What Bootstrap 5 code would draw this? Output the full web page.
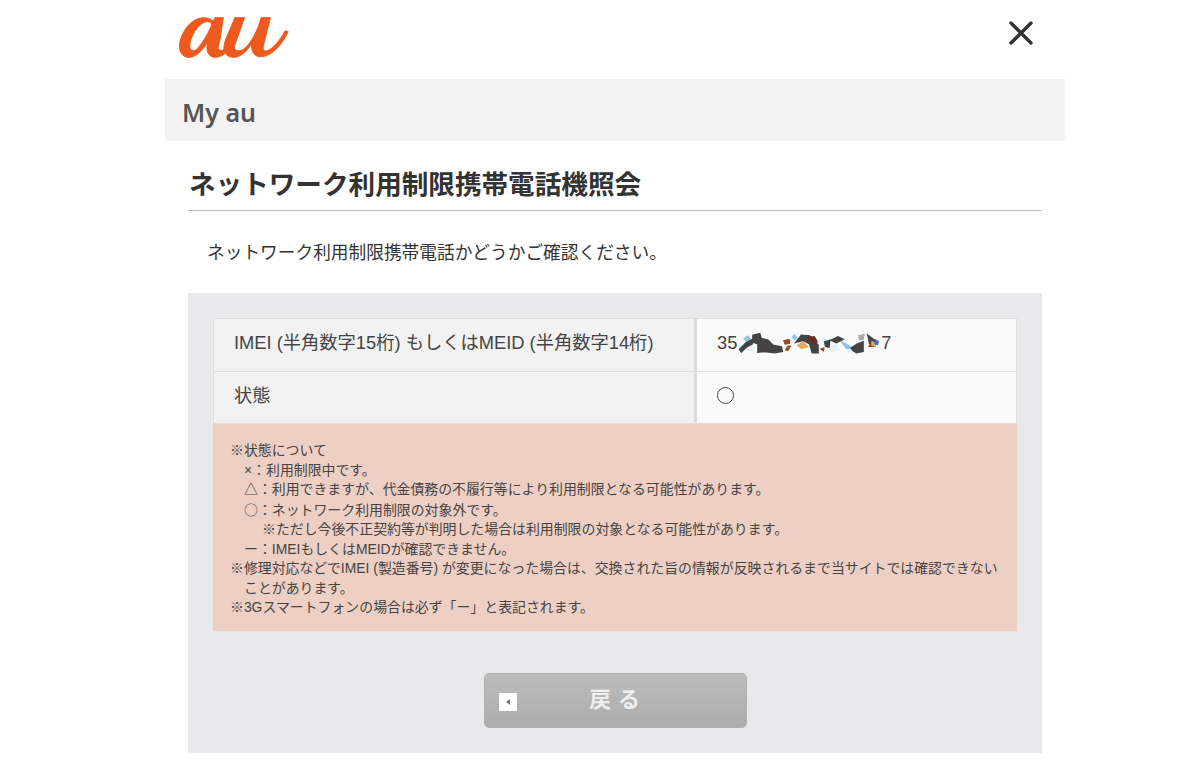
<!DOCTYPE html>
<html lang="ja">
<head>
    <meta charset="UTF-8">
    <meta name="viewport" content="width=device-width, initial-scale=1.0">
    <title>My au</title>
    <link href="https://cdn.jsdelivr.net/npm/bootstrap@5.3.3/dist/css/bootstrap.min.css" rel="stylesheet">
    <style>
        body{
            background-color: #fff;
            color: #333;
            font-family: "Liberation Sans", "Noto Sans CJK JP", sans-serif;
        }
        .wrap{
            width: 900px;
            height: 766px;
            margin-left: 165px;
            overflow: hidden;
        }
        .top-head{
            height: 79px;
            padding-left: 14px;
            padding-right: 31px;
        }
        .logo-au{
            width: 110px;
            height: 41px;
            margin-top: -5px;
            fill: #ee5a1e;
            stroke: #ee5a1e;
            stroke-width: 3;
        }
        .close-x{
            width: 26px;
            height: 26px;
            margin-top: -13px;
        }
        .myau-bar{
            height: 62px;
            padding-left: 17px;
            padding-top: 5px;
            background-color: #f2f2f2;
            color: #555;
            font-family: "Noto Sans", sans-serif;
            font-size: 25px;
            font-weight: 600;
        }
        .body-area{
            padding: 0 23px;
        }
        .page-title{
            height: 70px;
            margin: 0;
            padding-top: 26px;
            padding-left: 1px;
            border-bottom: 1px solid #bbb;
            font-size: 26.6px;
            font-weight: 700;
            line-height: 36px;
            color: #333;
        }
        .lead-txt{
            height: 82px;
            margin: 0;
            padding-top: 29px;
            padding-left: 19px;
            font-size: 17.7px;
            line-height: 26px;
            color: #333;
        }
        .gray-panel{
            height: 460px;
            padding: 25px 25px 0;
            background-color: #e9e9eb;
        }
        .imei-table{
            margin: 0;
            table-layout: fixed;
            border-color: #ddd;
            font-size: 18.3px;
        }
        .imei-table th, .imei-table td{
            height: 52px;
            padding: 0 20px 4px;
            vertical-align: middle;
            font-weight: 400;
            color: #444;
        }
        .imei-table tr:first-child th, .imei-table tr:first-child td{
            height: 53px;
        }
        .imei-table th{
            width: 482px;
            background-color: #f2f2f2;
            border-right-width: 3px;
        }
        .imei-table td{
            background-color: #fafafa;
        }
        .masked{
            width: 142px;
            height: 22px;
            margin: 0 1px 0 1px;
            vertical-align: -5px;
        }
        .maru{
            display: inline-block;
            width: 17px;
            height: 17px;
            border: 1px solid #444;
            border-radius: 50%;
            vertical-align: -2px;
        }
        .note-box{
            height: 207px;
            padding: 17px 17px 0;
            background-color: #eecfc3;
            color: #444;
            font-size: 13.9px;
            line-height: 19.5px;
        }
        .note-box p{
            margin: 0;
            white-space: nowrap;
        }
        .cjk-mark{
            font-family: "Noto Sans CJK JP", sans-serif;
        }
        .ind1{
            padding-left: 14px;
        }
        .ind2{
            padding-left: 32px;
        }
        .back-row{
            padding-top: 42px;
        }
        .back-btn{
            position: relative;
            width: 263px;
            height: 55px;
            padding: 0 0 2px 6px;
            border: 1px solid #b0b0b0;
            border-radius: 5px;
            background: linear-gradient(#bcbcbc, #adadad);
            color: #eee;
            font-size: 22px;
            font-weight: 700;
            letter-spacing: 7px;
        }
        .back-btn:hover{
            color: #eee;
        }
        .back-ico{
            position: absolute;
            left: 14px;
            top: 19px;
            width: 18px;
            height: 18px;
        }
    </style>
</head>
<body>
    <div class="wrap">
        <div class="top-head d-flex justify-content-between align-items-center">
            <svg class="logo-au" viewBox="42 48 332 124">
                <path fill-rule="evenodd" d="M176 50 L150 50 L146 60 C135 52 125 50 115 50 C80 52 55 85 45 120 C38 150 50 170 72 170 C92 170 112 150 128 125 C122 150 130 170 152 170 C170 170 188 155 198 135 L194 130 C185 145 170 152 164 148 C158 145 160 135 164 125 Z M128 62 C136 62 140 66 140 72 C130 100 100 150 85 150 C72 150 72 130 80 110 C90 85 110 62 128 62 Z"/>
                <path d="M240 50 L210 50 C200 80 180 115 178 135 C174 160 190 170 208 170 C228 170 248 150 262 128 C258 150 268 170 292 168 C325 165 355 130 372 92 L362 90 C350 115 325 145 308 150 C298 153 294 145 297 135 L318 50 L290 50 C280 90 250 148 225 150 C210 152 207 142 212 128 Z"/>
            </svg>
            <svg class="close-x" viewBox="0 0 26 26">
                <path d="M3 3 L23 23 M23 3 L3 23" stroke="#333" stroke-width="3.4" stroke-linecap="round" fill="none"/>
            </svg>
        </div>
        <div class="myau-bar d-flex align-items-center">My au</div>
        <div class="body-area">
            <h1 class="page-title">ネットワーク利用制限携帯電話機照会</h1>
            <p class="lead-txt">ネットワーク利用制限携帯電話かどうかご確認ください。</p>
            <div class="gray-panel">
                <table class="table table-bordered imei-table">
                    <tr>
                        <th>IMEI (半角数字15桁) もしくはMEID (半角数字14桁)</th>
                        <td>35<svg class="masked" viewBox="145 60 426 66">
                            <path fill="#8ec4e8" d="M160 80 L175 70 L185 82 L170 90 Z M305 75 L315 65 L325 80 L315 85 Z M450 85 L480 100 L490 110 L470 112 L460 100 Z"/>
                            <path fill="#e4f2f7" d="M170 108 L190 100 L195 115 L175 118 Z M415 105 L440 95 L450 115 L425 120 Z M470 115 L490 112 L490 122 L475 122 Z M390 80 L405 75 L415 85 L400 90 Z"/>
                            <path fill="#444" stroke="#444" stroke-width="5" d="M150 112 L170 92 L190 82 L188 95 L170 105 L155 120 Z M190 70 L210 65 L215 80 L235 85 L250 100 L275 105 L278 118 L255 122 L225 118 L205 120 L205 95 L190 90 Z M320 90 L335 70 L360 72 L385 100 L385 122 L368 122 L360 95 L340 85 Z M425 85 L445 75 L460 82 L440 92 Z M405 90 L420 85 L418 105 L408 103 Z M485 108 L505 95 L520 90 L520 118 L500 122 L490 115 Z M535 70 L555 85 L555 95 L540 95 Z"/>
                            <path fill="#9a4a25" d="M280 85 L300 80 L302 95 L285 98 Z M285 115 L295 100 L305 102 L295 118 Z M390 110 L405 105 L402 120 Z M535 105 L545 90 L560 105 Z"/>
                            <path fill="#6b2a22" d="M350 75 L375 72 L385 90 L372 100 Z"/>
                            <path fill="#e6a860" d="M320 100 L340 88 L358 105 L335 112 Z M545 85 L560 95 L555 105 L545 100 Z"/>
                            <path fill="#3f6fc0" d="M555 80 L568 88 L565 100 L555 98 Z"/>
                            <path fill="#aaa" d="M505 70 L525 65 L522 85 L508 85 Z"/>
                        </svg>7</td>
                    </tr>
                    <tr>
                        <th>状態</th>
                        <td><span class="maru"></span></td>
                    </tr>
                </table>
                <div class="note-box">
                    <p>※状態について</p>
                    <p class="ind1">×：利用制限中です。</p>
                    <p class="ind1">△：利用できますが、代金債務の不履行等により利用制限となる可能性があります。</p>
                    <p class="ind1"><span class="cjk-mark">○</span>：ネットワーク利用制限の対象外です。</p>
                    <p class="ind2">※ただし今後不正契約等が判明した場合は利用制限の対象となる可能性があります。</p>
                    <p class="ind1">ー：IMEIもしくはMEIDが確認できません。</p>
                    <p>※修理対応などでIMEI (製造番号) が変更になった場合は、交換された旨の情報が反映されるまで当サイトでは確認できない</p>
                    <p class="ind1">ことがあります。</p>
                    <p>※3Gスマートフォンの場合は必ず「ー」と表記されます。</p>
                </div>
                <div class="back-row d-flex justify-content-center">
                    <button type="button" class="btn back-btn d-flex align-items-center justify-content-center">
                        <svg class="back-ico" viewBox="0 0 18 18"><rect width="18" height="18" fill="#fff"/><path d="M11 6 L7 9 L11 12 Z" fill="#777"/></svg>
                        戻る
                    </button>
                </div>
            </div>
        </div>
    </div>
    <script src="https://cdn.jsdelivr.net/npm/bootstrap@5.3.3/dist/js/bootstrap.bundle.min.js"></script>
</body>
</html>
